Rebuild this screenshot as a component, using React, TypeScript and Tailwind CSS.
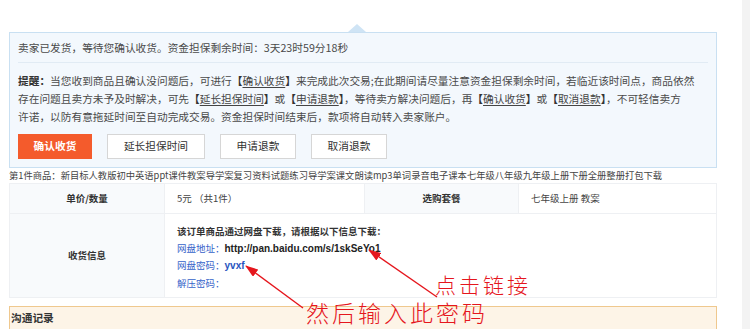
const FONT = '"Noto Sans CJK SC", "Microsoft YaHei", sans-serif'

function Bracket({ children }: { children: string }) {
  return (
    <>
      <b className="font-bold text-[#333]">【</b>
      <span className="underline underline-offset-2 text-[#444]">{children}</span>
      <b className="font-bold text-[#333]">】</b>
    </>
  )
}

const BUTTONS = [
  { label: '延长担保时间', w: 'w-[98px]' },
  { label: '申请退款', w: 'w-[76px]' },
  { label: '取消退款', w: 'w-[76px]' }
]

function Annotations() {
  return (
    <div className="absolute inset-0 pointer-events-none">
      <svg className="absolute inset-0" width="750" height="329" viewBox="0 0 750 329">
        <defs>
          <marker id="head" markerWidth="13" markerHeight="9" refX="12" refY="4.5" orient="auto" markerUnits="userSpaceOnUse">
            <path d="M0 0 L13 4.5 L0 9 Z" fill="#e5161d" />
          </marker>
        </defs>
        <line x1="437" y1="297" x2="369" y2="250" stroke="#e5161d" strokeWidth="1.4" markerEnd="url(#head)" />
        <line x1="303" y1="308" x2="246" y2="266" stroke="#e5161d" strokeWidth="1.4" markerEnd="url(#head)" />
      </svg>
      <div className="absolute left-[435px] top-[274px] text-[21px] leading-none tracking-[3px] text-[#e5161d] font-light">
        点击链接
      </div>
      <div className="absolute left-[306px] top-[301px] text-[23px] leading-none tracking-[3px] text-[#e5161d] font-light">
        然后输入此密码
      </div>
    </div>
  )
}

export default function App() {
  return (
    <div className="relative flex w-[750px] h-[329px] overflow-hidden bg-white" style={{ fontFamily: FONT }}>
      <div className="w-[742px] pl-[9px] pr-[25px]">
        {/* status panel */}
        <div className="relative mt-[32px] h-[136px] border border-[#c9e0f2] bg-[#f3f8fd] px-[8px] pt-[6px] text-[10.7px] text-[#4a4a4a]">
          <div className="absolute -top-[9px] left-[338px] w-0 h-0 border-l-[9px] border-r-[9px] border-b-[8px] border-l-transparent border-r-transparent border-b-[#cfe4f5]" />
          <div className="h-[18px] leading-[18px] whitespace-nowrap">
            卖家已发货，等待您确认收货。资金担保剩余时间：3天23时59分18秒
          </div>
          <div className="mt-[5px] h-px bg-[#e1ebf4]" />
          <div className="mt-[9px] leading-[18px] whitespace-nowrap">
            <div>
              <b className="font-bold text-[#333]">提醒：</b>当您收到商品且确认没问题后，可进行<Bracket>确认收货</Bracket>来完成此次交易;在此期间请尽量注意资金担保剩余时间，若临近该时间点，商品依然
            </div>
            <div>
              存在问题且卖方未予及时解决，可先<Bracket>延长担保时间</Bracket>或<Bracket>申请退款</Bracket>，等待卖方解决问题后，再<Bracket>确认收货</Bracket>或<Bracket>取消退款</Bracket>，不可轻信卖方
            </div>
            <div>许诺，以防有意拖延时间至自动完成交易。资金担保时间结束后，款项将自动转入卖家账户。</div>
          </div>
          <div className="mt-[8px] flex gap-[15px]">
            <button className="w-[74px] h-[25px] bg-[#f45b2c] text-white font-bold">确认收货</button>
            {BUTTONS.map((b) => (
              <button key={b.label} className={`${b.w} h-[25px] bg-white border border-[#d6d6d6] text-[#333]`}>
                {b.label}
              </button>
            ))}
          </div>
        </div>

        {/* goods title */}
        <div className="h-[15px] leading-[15px] text-[9.3px] text-[#444] whitespace-nowrap">
          第1件商品：新目标人教版初中英语ppt课件教案导学案复习资料试题练习导学案课文朗读mp3单词录音电子课本七年级八年级九年级上册下册全册整册打包下载
        </div>

        {/* detail table */}
        <div className="grid grid-cols-[155px_200px_154px_1fr] border border-[#eef0f3] text-[9.5px] text-[#444]">
          <div className="h-[30px] flex items-center justify-center bg-[#f8fafc] border-r border-b border-[#eef0f3] font-bold text-[#333]">
            单价/数量
          </div>
          <div className="h-[30px] flex items-center pl-[12px] border-r border-b border-[#eef0f3]">5元 （共1件）</div>
          <div className="h-[30px] flex items-center justify-center bg-[#f8fafc] border-r border-b border-[#eef0f3] font-bold text-[#333]">
            选购套餐
          </div>
          <div className="h-[30px] flex items-center pl-[12px] border-b border-[#eef0f3]">七年级上册 教案</div>

          <div className="h-[83px] flex items-center justify-center bg-[#f8fafc] border-r border-[#eef0f3] font-bold text-[#333]">
            收货信息
          </div>
          <div className="col-span-3 h-[83px] pl-[12px] pt-[9px] leading-[16.5px]">
            <div className="font-bold text-[#333]">该订单商品通过网盘下载，请根据以下信息下载：</div>
            <div>
              <span className="text-[#3562c9]">网盘地址：</span>
              <span className="font-bold text-[#222] text-[10px]" style={{ fontFamily: '"Liberation Sans", Arial, sans-serif' }}>
                http://pan.baidu.com/s/1skSeYo1
              </span>
            </div>
            <div>
              <span className="text-[#3562c9]">网盘密码：</span>
              <span className="font-bold text-[#2a55c0] text-[10px]" style={{ fontFamily: '"Liberation Sans", Arial, sans-serif' }}>
                yvxf
              </span>
            </div>
            <div className="text-[#3562c9]">解压密码：</div>
          </div>
        </div>

        {/* communication bar */}
        <div className="mt-[8px] h-[26px] border border-[#efc88e] bg-[#fdf4e7] pl-px pt-[3px] text-[10.7px] font-bold text-[#333]">
          沟通记录
        </div>
      </div>
      <div className="w-[8px] bg-[#f3f3f3]" />
      <Annotations />
    </div>
  )
}
